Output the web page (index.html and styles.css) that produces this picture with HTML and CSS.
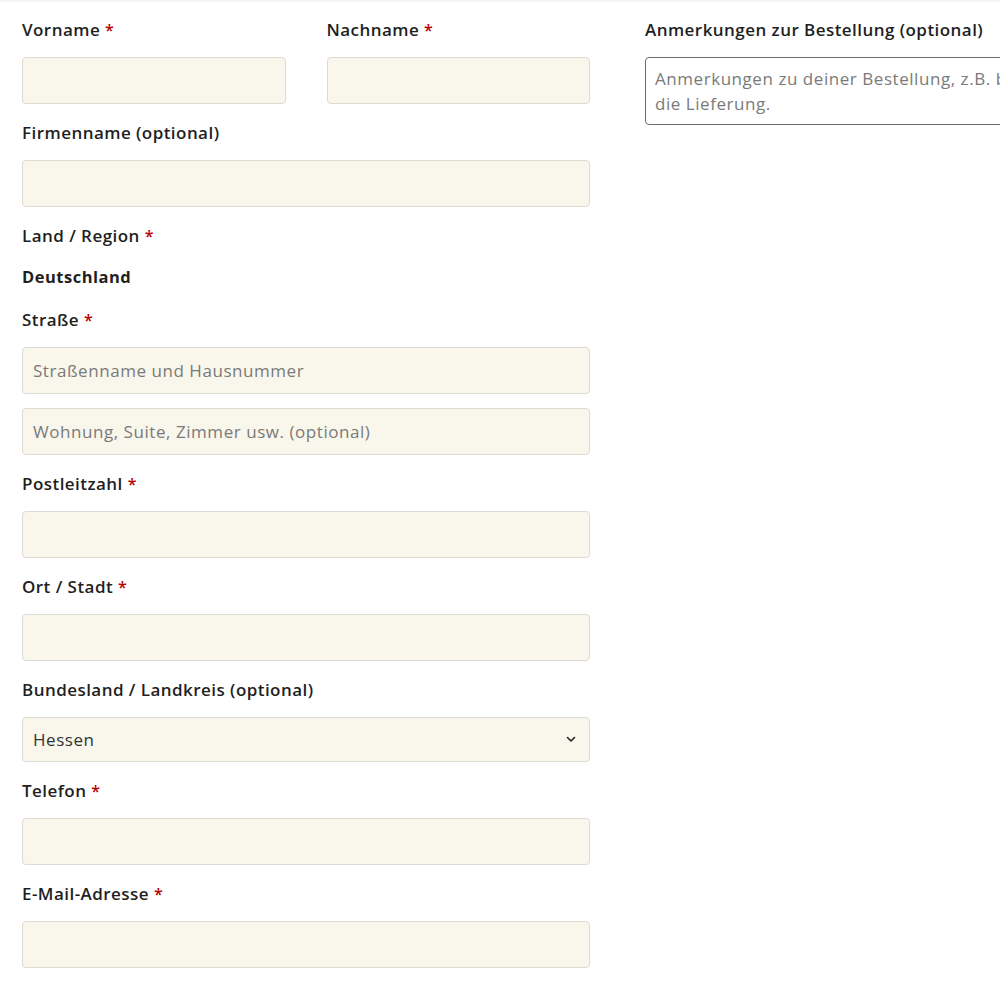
FILE: index.html
```html
<!DOCTYPE html>
<html lang="de">
<head>
  <meta charset="UTF-8" />
  <meta name="viewport" content="width=device-width, initial-scale=1.0"/>
  <title>Kasse</title>
  <link rel="stylesheet" href="styles.css">
</head>
<body>
  <div class="topbar"></div>
  <form class="checkout">
    <div class="billing">
      <div class="name-row">
        <div class="field">
          <label>Vorname <abbr class="required">*</abbr></label>
          <input type="text" class="input" />
        </div>
        <div class="field">
          <label>Nachname <abbr class="required">*</abbr></label>
          <input type="text" class="input" />
        </div>
      </div>

      <div class="field">
        <label>Firmenname (optional)</label>
        <input type="text" class="input" />
      </div>

      <div class="field field-country">
        <label>Land / Region <abbr class="required">*</abbr></label>
        <strong class="country">Deutschland</strong>
      </div>

      <div class="field">
        <label>Straße <abbr class="required">*</abbr></label>
        <input type="text" class="input" placeholder="Straßenname und Hausnummer" />
        <input type="text" class="input input-second" placeholder="Wohnung, Suite, Zimmer usw. (optional)" />
      </div>

      <div class="field">
        <label>Postleitzahl <abbr class="required">*</abbr></label>
        <input type="text" class="input" />
      </div>

      <div class="field">
        <label>Ort / Stadt <abbr class="required">*</abbr></label>
        <input type="text" class="input" />
      </div>

      <div class="field">
        <label>Bundesland / Landkreis (optional)</label>
        <div class="select">
          <span>Hessen</span>
          <svg width="10" height="7" viewBox="0 0 10 7"><path d="M1.5 1.5 L5 5 L8.5 1.5" fill="none" stroke="#222" stroke-width="1.6" stroke-linecap="round" stroke-linejoin="round"/></svg>
        </div>
      </div>

      <div class="field">
        <label>Telefon <abbr class="required">*</abbr></label>
        <input type="tel" class="input" />
      </div>

      <div class="field">
        <label>E-Mail-Adresse <abbr class="required">*</abbr></label>
        <input type="email" class="input" />
      </div>
    </div>

    <div class="additional">
      <div class="field">
        <label>Anmerkungen zur Bestellung (optional)</label>
        <textarea class="notes" rows="2" placeholder="Anmerkungen zu deiner Bestellung, z.B. besondere Hinweise für die Lieferung."></textarea>
      </div>
    </div>
  </form>
</body>
</html>
```

FILE: styles.css
```css
html, body {
  overflow: hidden;
}
body {
  margin: 0;
  background: #fff;
  color: #1f1f1f;
  font-family: "Open Sans", sans-serif;
  font-size: 16px;
}
.topbar {
  height: 3px;
  background: linear-gradient(#f2f2f2, #fff);
}
.checkout {
  display: grid;
  grid-template-columns: 568px 575px;
  column-gap: 55px;
  padding: 15px 0 0 22px;
}
.name-row {
  display: flex;
  gap: 41px;
}
.name-row .field {
  flex: 1;
}
.field {
  display: flex;
  flex-direction: column;
  margin-bottom: 17px;
}
.field label {
  font-weight: 600;
  font-size: 17px;
  letter-spacing: 0.45px;
  line-height: 24px;
  margin-bottom: 15px;
}
.required {
  color: #b80000;
  text-decoration: none;
  font-weight: 600;
  font-size: 16px;
}
.input, .select {
  box-sizing: border-box;
  height: 47px;
  padding: 0 10px;
  font-family: inherit;
  font-size: 17px;
  letter-spacing: 0.55px;
  color: #333;
  background: #f9f6eb;
  border: 1px solid #dcdad3;
  border-radius: 4px;
}
.input::placeholder {
  color: #7a7a7a;
}
.input-second {
  margin-top: 14px;
}
.field-country {
  margin-bottom: 19px;
}
.field-country label {
  margin-bottom: 17px;
}
.country {
  font-weight: 700;
  font-size: 16.5px;
  letter-spacing: 0.5px;
  line-height: 24px;
}
.select {
  display: flex;
  align-items: center;
  justify-content: space-between;
  height: 45px;
  padding-right: 13px;
}
.notes {
  box-sizing: border-box;
  width: 100%;
  height: 68px;
  padding: 8px 9px;
  font-family: inherit;
  font-size: 17px;
  letter-spacing: 0.55px;
  line-height: 25px;
  border: 1px solid #6e6a6a;
  border-radius: 4px;
  resize: none;
  overflow: hidden;
}
.notes::placeholder {
  color: #7a7a7a;
}
```
